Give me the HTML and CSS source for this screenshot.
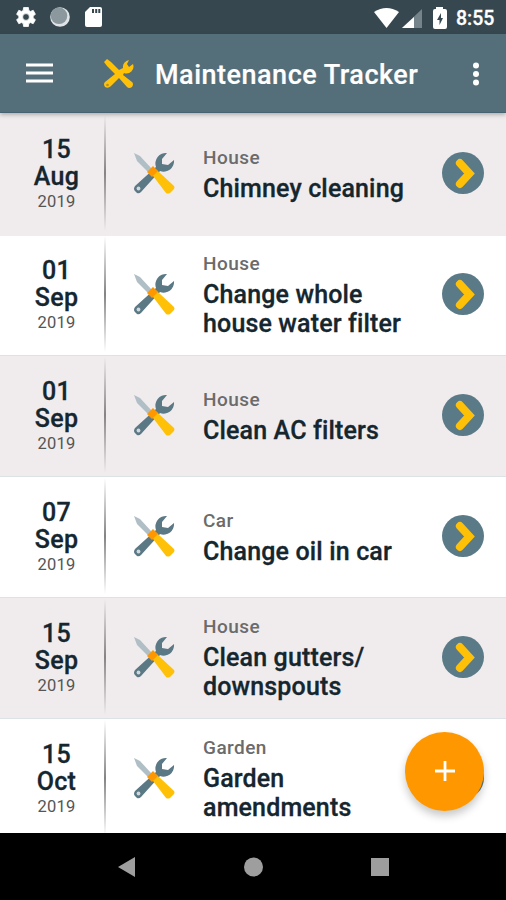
FILE: index.html
```html
<!DOCTYPE html>
<html lang="en">
<head>
<meta charset="utf-8">
<title>Maintenance Tracker</title>
<link rel="stylesheet" href="styles.css">
</head>
<body>
<svg class="defs" width="0" height="0" aria-hidden="true">
  <symbol id="tools" viewBox="0 0 42 42">
    <path d="M1 1 7 4 19 17 15 20 4 9Z" fill="#b0bec5"/>
    <path d="M34 1A10.500 10.500 0 0 0 23 15L2 34Q0 37 2 39L4 41Q6 42 8 40L27 19A10.500 10.500 0 0 0 41 8L35 13 29 12 29 7Z" fill="#5b7885"/>
    <circle cx="5.500" cy="36.500" r="1.900" fill="#cfd8dc"/>
    <path d="M20 15 26 20 41 34Q42 35 41 37L37 41Q35 42 33 41L17 20Z" fill="#ffc107"/>
    <path d="M20 14 25 19 19 25 14 20Z" fill="#ff9800"/>
  </symbol>
  <symbol id="go" viewBox="0 0 42 42">
    <circle cx="21" cy="21" r="21" fill="#5b7a88"/>
    <path d="M17.800 11 27.500 21.500 17.800 32" fill="none" stroke="#ffc107" stroke-width="7.800" stroke-linecap="round" stroke-linejoin="miter"/>
  </symbol>
</svg>
<div class="screen">
  <div class="status">
    <svg class="gear" viewBox="0 0 24 24"><path fill="#fff" fill-rule="evenodd" stroke="#fff" stroke-width=".8" stroke-linejoin="round" d="M19.1 13q.1-1 0-2l2.3-1.7-2.2-4-2.7 1.1-1.7-1L14.400 2.500H9.600L9.200 5.400l-1.700 1-2.700-1.100-2.200 4L4.900 11q-.1 1 0 2l-2.300 1.700 2.200 4 2.700-1.100 1.700 1 .4 2.900h4.800l.4-2.900 1.700-1 2.700 1.100 2.200-4zM12 8.600a3.400 3.400 0 1 1 0 6.800 3.400 3.400 0 0 1 0-6.800z"/></svg>
    <svg class="moon" viewBox="0 0 20 20"><circle cx="10" cy="10" r="9.800" fill="#dfe4e6"/><circle cx="9" cy="8.800" r="8.300" fill="#8b989d"/></svg>
    <svg class="card" viewBox="0 0 18 22"><path fill="#fff" d="M6 1H16Q18 1 18 3V19Q18 21 16 21H3Q1 21 1 19V6Z"/><path fill="#37474f" d="M8 3h2v4H8zm3.200 0h2v4h-2zM14.300 3h2v4h-2z"/></svg>
    <svg class="signals" viewBox="0 0 74 24"><path fill="#fff" d="M0 5Q12.500-3 25 5L12.500 21Z"/><path fill="#75838a" d="M48 2V21H28Z"/><path fill="#fff" d="M40 10V21H28Z"/><path fill="#fff" d="M62 2V0H69V2H71Q73 2 73 4V20Q73 22 71 22H61Q59 22 59 20V4Q59 2 61 2Z"/><path fill="#37474f" d="M67 6 63 13H65.500V18L69 11H67Z"/></svg>
    <span class="clock">8:55</span>
  </div>
  <header class="bar">
    <svg class="menu" viewBox="0 0 28 20"><path d="M0 2H27M0 10H27M0 18H27" stroke="#fff" stroke-width="3"/></svg>
    <svg class="logo" viewBox="0 0 30 30"><path fill="#ffc107" d="M0 3 3 0 7 3 15 11 19 9A7 7 0 0 1 25 1L23 5 25 8 29 5A7 7 0 0 1 20 14L19 16 28 23Q30 25 28 28 25 30 23 28L15 19 7 27Q4 30 1 28-1 25 1 23L11 15 3 7Z"/><circle cx="3.500" cy="26" r="1.300" fill="#b68e2a"/></svg>
    <h1>Maintenance Tracker</h1>
    <svg class="more" viewBox="0 0 8 24"><g fill="#fff"><circle cx="4" cy="3.500" r="3"/><circle cx="4" cy="12" r="3"/><circle cx="4" cy="20.500" r="3"/></g></svg>
  </header>
  <main class="list">
    <article class="row shaded tall"><div class="date"><b>15</b><b>Aug</b><span>2019</span></div><i class="rule"></i><svg class="tools"><use href="#tools"/></svg><div class="text single"><p>House</p><h2>Chimney cleaning</h2></div><svg class="go"><use href="#go"/></svg></article>
    <article class="row short"><div class="date"><b>01</b><b>Sep</b><span>2019</span></div><i class="rule"></i><svg class="tools"><use href="#tools"/></svg><div class="text"><p>House</p><h2>Change whole<br>house water filter</h2></div><svg class="go"><use href="#go"/></svg></article>
    <article class="row shaded"><div class="date"><b>01</b><b>Sep</b><span>2019</span></div><i class="rule"></i><svg class="tools"><use href="#tools"/></svg><div class="text single"><p>House</p><h2>Clean AC filters</h2></div><svg class="go"><use href="#go"/></svg></article>
    <article class="row"><div class="date"><b>07</b><b>Sep</b><span>2019</span></div><i class="rule"></i><svg class="tools"><use href="#tools"/></svg><div class="text single"><p>Car</p><h2>Change oil in car</h2></div><svg class="go"><use href="#go"/></svg></article>
    <article class="row shaded"><div class="date"><b>15</b><b>Sep</b><span>2019</span></div><i class="rule"></i><svg class="tools"><use href="#tools"/></svg><div class="text"><p>House</p><h2>Clean gutters/<br>downspouts</h2></div><svg class="go"><use href="#go"/></svg></article>
    <article class="row"><div class="date"><b>15</b><b>Oct</b><span>2019</span></div><i class="rule"></i><svg class="tools"><use href="#tools"/></svg><div class="text"><p>Garden</p><h2>Garden<br>amendments</h2></div><svg class="go"><use href="#go"/></svg></article>
  </main>
  <nav class="nav">
    <svg viewBox="0 0 20 20"><path d="M19 0V20L2 10Z"/></svg>
    <svg viewBox="0 0 20 20"><circle cx="10.500" cy="10" r="9.500"/></svg>
    <svg viewBox="0 0 20 20"><path d="M1 1H19V19H1Z"/></svg>
  </nav>
  <button class="fab" aria-label="Add"><svg viewBox="0 0 22 22"><path d="M11 1V21M1 11H21" stroke="#fff" stroke-width="2.800"/></svg></button>
</div>
</body>
</html>
```
FILE: styles.css
```css
* { box-sizing: border-box; }
body { margin: 0; font-family: Roboto, sans-serif; }
h1, h2, p { margin: 0; }
svg { display: block; flex: none; }
.defs { position: absolute; }
.screen { position: relative; width: 506px; height: 900px; display: flex; flex-direction: column; overflow: hidden; }
.status { height: 34px; flex: none; background: #37474f; display: flex; align-items: center; padding-left: 14px; }
.gear { width: 24px; height: 24px; }
.moon { width: 20px; height: 20px; margin-left: 12px; }
.card { width: 18px; height: 22px; margin-left: 14px; }
.signals { width: 74px; height: 24px; margin: 3px 0 0 272px; }
.clock { color: #fff; font-size: 19.500px; font-weight: 500; line-height: 34px; margin: 3px 0 0 8px; -webkit-text-stroke: .3px; }
.bar { height: 79px; flex: none; background: #546e7a; border-bottom: 1px solid #456370; display: flex; align-items: center; padding: 0 26px 0 26px; z-index: 1; box-shadow: 0 2px 4px rgba(0, 0, 0, .25); }
.menu { width: 28px; height: 20px; }
.logo { width: 30px; height: 30px; margin: 1px 0 0 50px; }
.bar h1 { color: #fff; font-size: 27px; font-weight: 500; line-height: 36px; letter-spacing: .5px; margin: 3px 0 0 21px; white-space: nowrap; -webkit-text-stroke: .2px; }
.more { width: 8px; height: 24px; margin: 1px 0 0 auto; }
.list { height: 720px; flex: none; overflow: hidden; }
.row { height: 121px; display: flex; align-items: center; border-top: 1px solid #dde2e4; background: #fff; padding-bottom: 2px; }
.row.shaded { background: #f0ecee; }
.row.tall { height: 123px; padding-bottom: 4px; border-color: #f0ecee; }
.row.short { height: 119px; padding-bottom: 4px; border-color: #fff; }
.date { width: 104px; padding: 2px 0 0 9px; display: flex; flex-direction: column; align-items: center; color: #15262f; }
.date b { font-size: 25px; font-weight: 500; line-height: 27px; letter-spacing: .3px; -webkit-text-stroke: .3px; }
.date span { font-size: 16.500px; line-height: 23px; letter-spacing: .2px; color: #555; }
.rule { width: 2px; height: 116px; background: linear-gradient(transparent, #858384 50%, transparent); }
.tools { width: 42px; height: 42px; margin-left: 27px; }
.text { width: 239px; margin-left: 28px; padding-top: 1px; white-space: nowrap; }
.text.single { padding-top: 3px; }
.text p { font-size: 19px; font-weight: 500; line-height: 26px; letter-spacing: .45px; color: #6b6b6b; }
.text h2 { font-size: 25px; font-weight: 500; line-height: 29.500px; letter-spacing: .15px; color: #15262f; margin-top: 3px; -webkit-text-stroke: .3px; }
.go { width: 42px; height: 42px; }
.nav { height: 67px; background: #000; display: flex; align-items: center; justify-content: center; gap: 107px; }
.nav svg { width: 20px; height: 20px; fill: #9e9e9e; }
.fab { position: absolute; left: 405px; top: 731.500px; width: 79px; height: 79px; border: 0; border-radius: 50%; background: #ff9800; padding: 0; display: grid; place-items: center; box-shadow: 0 5px 9px rgba(0, 0, 0, .22); }
.fab svg { width: 22px; height: 22px; }
```
